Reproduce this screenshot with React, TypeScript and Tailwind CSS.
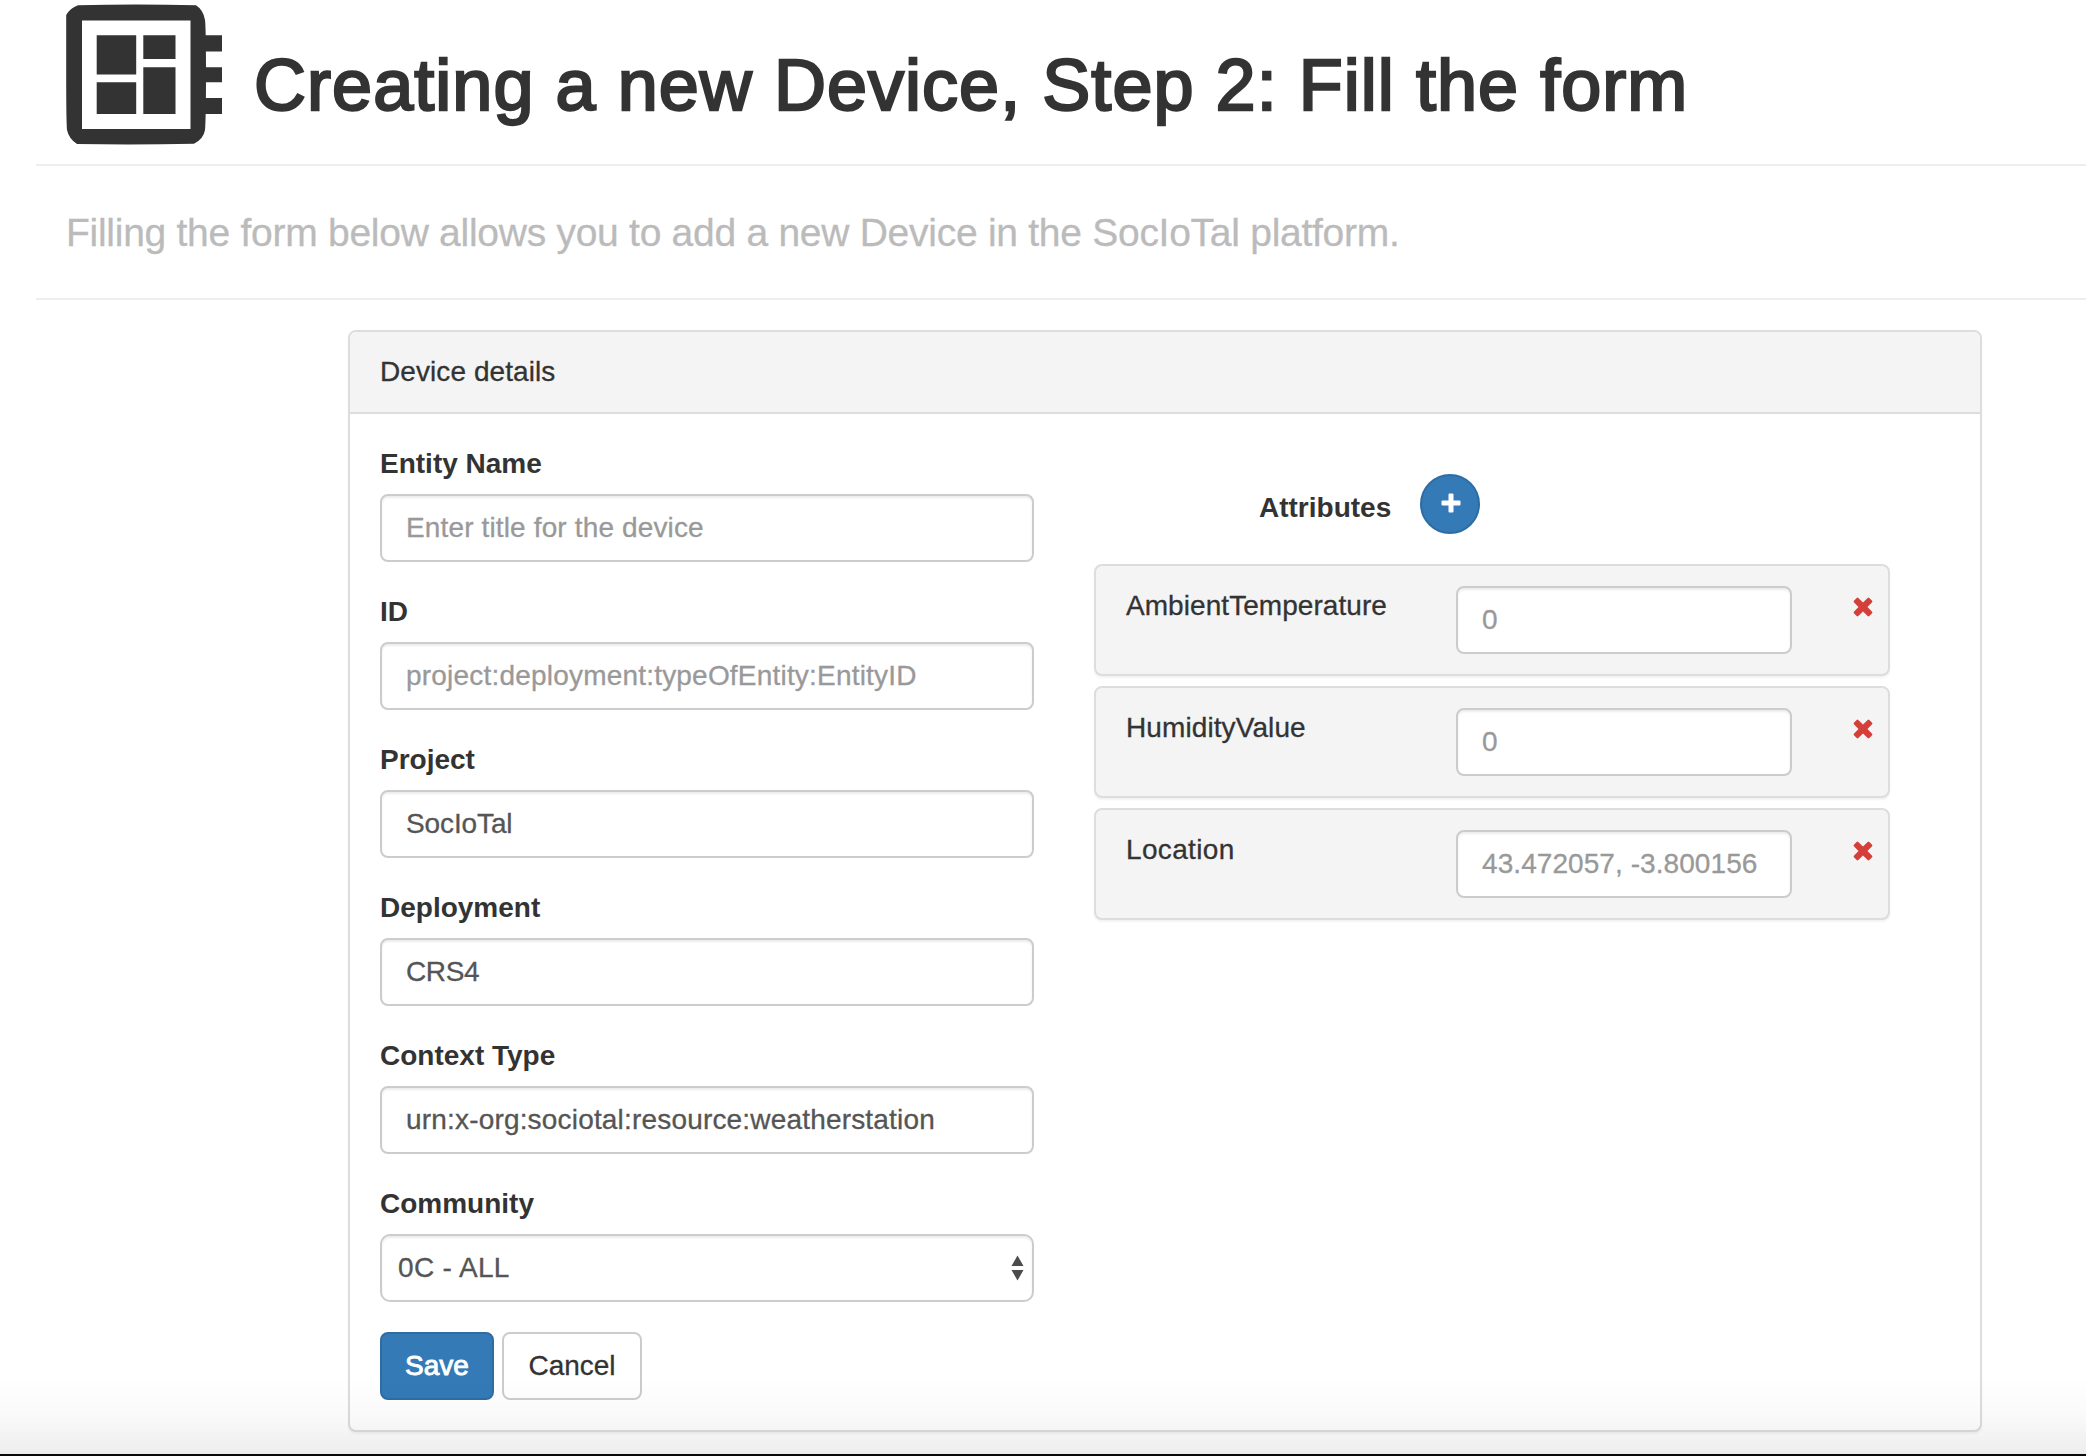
import React from "react";

const inputClass =
  "block h-[68px] w-full rounded-[8px] border-2 border-[#ccc] bg-white px-6 text-[28px] text-[#555] shadow-[inset_0_2px_2px_rgba(0,0,0,0.075)] outline-none placeholder:text-[#999] placeholder:opacity-100";

function DeviceIcon() {
  return (
    <svg width="158" height="142" viewBox="64 3 158 142" className="block shrink-0" fill="#333">
      <path
        fillRule="evenodd"
        d="M78 5.200 Q136 4 196 5.200 Q203.500 10 205 20 Q206 28 206 75 Q206 118 205 130 Q203.500 139 194 143.700 Q136 145 77 144 Q69 139 67 130 Q66.200 122 66.200 75 V15 Q70 8 78 5.200 Z M82 20.500 V129 H190.500 V20.500 Z"
      />
      <path d="M96.700 35.300h39.500v39.200H96.700z M143.300 35.300h32.200v23.700h-32.200z M96.700 82.300h39.500v31.700H96.700z M143.300 67.200h32.200v46.800h-32.200z M205 35.300h17v16.200h-17z M205 67.200h17v15h-17z M205 98h17v16h-17z" />
    </svg>
  );
}

function PlusIcon() {
  return (
    <svg width="20" height="20" viewBox="0 0 20 20" fill="#fff" className="block">
      <path d="M8.500 0.500h3a1 1 0 0 1 1 1V7.500h6a1 1 0 0 1 1 1v3a1 1 0 0 1-1 1H12.500v6a1 1 0 0 1-1 1h-3a1 1 0 0 1-1-1V12.500H1.500a1 1 0 0 1-1-1v-3a1 1 0 0 1 1-1H7.500V1.500a1 1 0 0 1 1-1z" />
    </svg>
  );
}

function RemoveIcon() {
  return (
    <svg width="20" height="20" viewBox="0 0 20 20" className="block" fill="#d43f3a">
      <path d="M3.700 0.900 Q4.500 0.300 5.300 0.900 L10 5.500 L14.700 0.900 Q15.500 0.300 16.300 0.900 L19.100 3.700 Q19.700 4.500 19.100 5.300 L14.500 10 L19.100 14.700 Q19.700 15.500 19.100 16.300 L16.300 19.100 Q15.500 19.700 14.700 19.100 L10 14.500 L5.300 19.100 Q4.500 19.700 3.700 19.100 L0.900 16.300 Q0.300 15.500 0.900 14.700 L5.500 10 L0.900 5.300 Q0.300 4.500 0.900 3.700 Z" />
    </svg>
  );
}

const fields = [
  { label: "Entity Name", placeholder: "Enter title for the device", value: "", tracking: "tracking-[0.14px]" },
  { label: "ID", placeholder: "project:deployment:typeOfEntity:EntityID", value: "", tracking: "tracking-[0.2px]" },
  { label: "Project", placeholder: "", value: "SocIoTal", tracking: "tracking-[-0.12px]" },
  { label: "Deployment", placeholder: "", value: "CRS4", tracking: "tracking-[-0.4px]" },
  { label: "Context Type", placeholder: "", value: "urn:x-org:sociotal:resource:weatherstation", tracking: "tracking-[0.18px]" },
];

const attributes = [
  { name: "AmbientTemperature", placeholder: "0", tracking: "tracking-[0.06px]" },
  { name: "HumidityValue", placeholder: "0", tracking: "tracking-[0.1px]" },
  { name: "Location", placeholder: "43.472057, -3.800156", tracking: "tracking-[0.35px]" },
];

export default function App() {
  return (
    <div className="flex h-[1456px] w-full flex-col overflow-hidden bg-white font-['Liberation_Sans',Arial,sans-serif] text-[28px] leading-[40px] text-[#333] [-webkit-text-stroke:0.3px_currentColor]">
      <div className="relative flex-1 overflow-hidden pl-9">
        <header className="flex h-[166px] border-b-2 border-[#eee] pt-[3px] pl-7">
          <DeviceIcon />
          <h1 className="mt-[42px] ml-8 text-[72px] leading-[80px] tracking-[1.04px] whitespace-nowrap [-webkit-text-stroke:2.4px_#333]">
            Creating a new Device, Step 2: Fill the form
          </h1>
        </header>
        <p className="flex h-[134px] items-center border-b-2 border-[#eee] pt-[2px] pl-[30px] text-[39px] tracking-[-0.27px] text-[#bbb]">
          Filling the form below allows you to add a new Device in the SocIoTal platform.
        </p>

        <section className="mt-[30px] ml-[312px] h-[1102px] w-[1634px] rounded-[8px] border-2 border-[#ddd] bg-white shadow-[0_2px_2px_rgba(0,0,0,0.05)]">
          <h2 className="h-[82px] rounded-t-[6px] border-b-2 border-[#ddd] bg-[#f4f4f4] px-[30px] py-5 tracking-[0.08px]">
            Device details
          </h2>
          <div className="flex px-[30px] pt-[30px]">
            <form className="w-[654px]">
              {fields.map((f) => (
                <div key={f.label} className="mb-[30px]">
                  <label className="mb-[10px] block font-bold [-webkit-text-stroke:0px]">{f.label}</label>
                  <input className={inputClass + " " + f.tracking} placeholder={f.placeholder} defaultValue={f.value} />
                </div>
              ))}
              <div className="mb-[30px]">
                <span className="mb-[10px] block font-bold [-webkit-text-stroke:0px]">Community</span>
                <button
                  type="button"
                  className="flex h-[68px] w-full items-center justify-between rounded-[10px] border-2 border-[#ccc] bg-white pr-[8px] pl-4 text-[#555] shadow-[inset_0_2px_2px_rgba(0,0,0,0.075)]"
                >
                  <span className="tracking-[0.35px]">0C - ALL</span>
                  <svg width="13" height="26" viewBox="0 0 13 26" fill="#4c4c4c">
                    <path d="M6.500 0.500 12.500 11H0.500z M0.500 15H12.500L6.500 25.500z" />
                  </svg>
                </button>
              </div>
              <div className="flex gap-2">
                <button type="button" className="h-[68px] w-[114px] rounded-[8px] border-2 border-[#2e6da4] bg-[#337ab7] text-white [-webkit-text-stroke:0.9px_#fff]">
                  Save
                </button>
                <button type="button" className="h-[68px] w-[140px] rounded-[8px] border-2 border-[#ccc] bg-white">
                  Cancel
                </button>
              </div>
            </form>

            <div className="ml-[60px] w-[796px] pt-[30px]">
              <div className="mb-[30px] flex h-[60px]">
                <span className="mt-[14px] ml-[165px] w-[161px] font-bold [-webkit-text-stroke:0px]">Attributes</span>
                <button type="button" className="flex size-[60px] items-center justify-center rounded-full border-2 border-[#2e6da4] bg-[#337ab7] pb-[2px] pl-[1px]">
                  <PlusIcon />
                </button>
              </div>
              {attributes.map((a) => (
                <div key={a.name} className="mb-[10px] flex h-[112px] rounded-[8px] border-2 border-[#ddd] bg-[#f4f4f4] pt-5 pr-[15px] pl-[30px] shadow-[0_2px_2px_rgba(0,0,0,0.05)]">
                  <span className={"w-[330px] " + a.tracking}>{a.name}</span>
                  <div className="w-[336px]">
                    <input className={inputClass + " tracking-[0.07px]"} placeholder={a.placeholder} />
                  </div>
                  <button type="button" className="mt-[11px] ml-auto h-5" aria-label={"Remove " + a.name}>
                    <RemoveIcon />
                  </button>
                </div>
              ))}
            </div>
          </div>
        </section>
        <div className="pointer-events-none absolute inset-x-0 bottom-0 h-[80px] bg-linear-to-b from-black/0 via-black/2 to-black/7" />
      </div>
      <div className="h-[2px] bg-[#0b070c]" />
    </div>
  );
}
